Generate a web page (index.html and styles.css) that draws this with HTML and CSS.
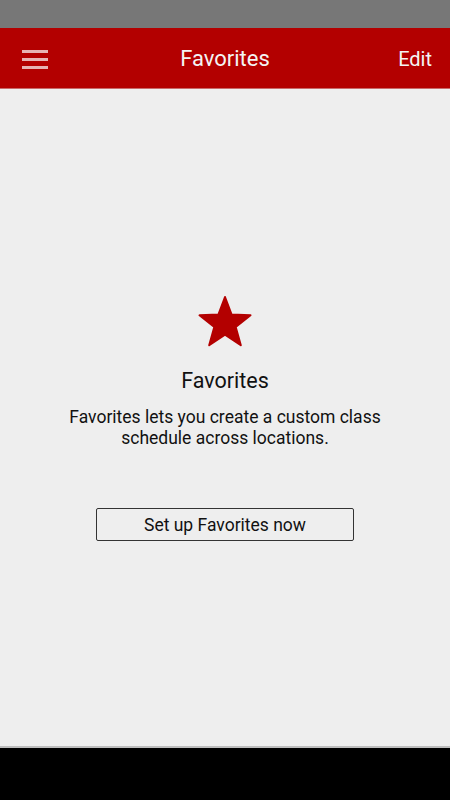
FILE: index.html
```html
<!DOCTYPE html>
<html>
<head>
<meta charset="utf-8">
<link rel="stylesheet" href="styles.css">
</head>
<body>
<div class="app">
  <div class="statusbar"></div>
  <header class="toolbar">
    <div class="menu">
      <span></span><span></span><span></span>
    </div>
    <div class="title">Favorites</div>
    <div class="edit">Edit</div>
  </header>
  <main class="content">
    <svg class="star" width="56" height="54" viewBox="0 0 56 54">
      <path d="M28 2 L34.6 19.6 L53.5 20.3 L38.7 32 L43.8 50.2 L28 39.7 L12.2 50.2 L17.3 32 L2.5 20.3 L21.4 19.6 Z" fill="#b30000" stroke="#b30000" stroke-width="2" stroke-linejoin="round"/>
    </svg>
    <h1 class="heading">Favorites</h1>
    <p class="desc">Favorites lets you create a custom class schedule across locations.</p>
    <button class="setup">Set up Favorites now</button>
  </main>
  <div class="navbar"></div>
</div>
</body>
</html>
```

FILE: styles.css
```css
html, body {
  margin: 0;
  padding: 0;
}
body {
  font-family: Roboto, "Noto Sans", sans-serif;
  background: #000;
}
.app {
  width: 450px;
  height: 800px;
  display: flex;
  flex-direction: column;
}
.statusbar {
  height: 28px;
  background: #777777;
}
.toolbar {
  height: 61px;
  background: #b30000;
  border-bottom: 1px solid #c86a6a;
  box-sizing: border-box;
  display: flex;
  align-items: center;
  justify-content: space-between;
  padding: 0 18px 0 22px;
  position: relative;
  color: #f4f4f4;
}
.menu {
  width: 26px;
  display: flex;
  flex-direction: column;
  gap: 5px;
  margin-top: 2px;
}
.menu span {
  display: block;
  height: 3px;
  background: #e6b3b3;
}
.title {
  position: absolute;
  left: 0;
  right: 0;
  text-align: center;
  font-size: 22px;
  pointer-events: none;
  margin-top: 1px;
}
.edit {
  font-size: 20px;
  margin-top: 1px;
}
.content {
  flex: 1;
  background: #eeeeee;
  border-bottom: 2px solid #bdbdbd;
  display: flex;
  flex-direction: column;
  align-items: center;
  padding-top: 206px;
  box-sizing: border-box;
}
.star {
  display: block;
}
.heading {
  margin: 19px 0 0;
  font-size: 21.5px;
  font-weight: 400;
  color: #111;
  line-height: 26px;
}
.desc {
  margin: 13px 0 0;
  width: 340px;
  text-align: center;
  font-size: 17.5px;
  line-height: 21px;
  color: #111;
}
.setup {
  margin-top: 59px;
  width: 258px;
  height: 33px;
  border: 1px solid #333;
  border-radius: 2px;
  background: transparent;
  font-family: Roboto, "Noto Sans", sans-serif;
  font-size: 17.5px;
  color: #111;
  padding: 0;
}
.navbar {
  height: 52px;
  background: #000;
}
```
